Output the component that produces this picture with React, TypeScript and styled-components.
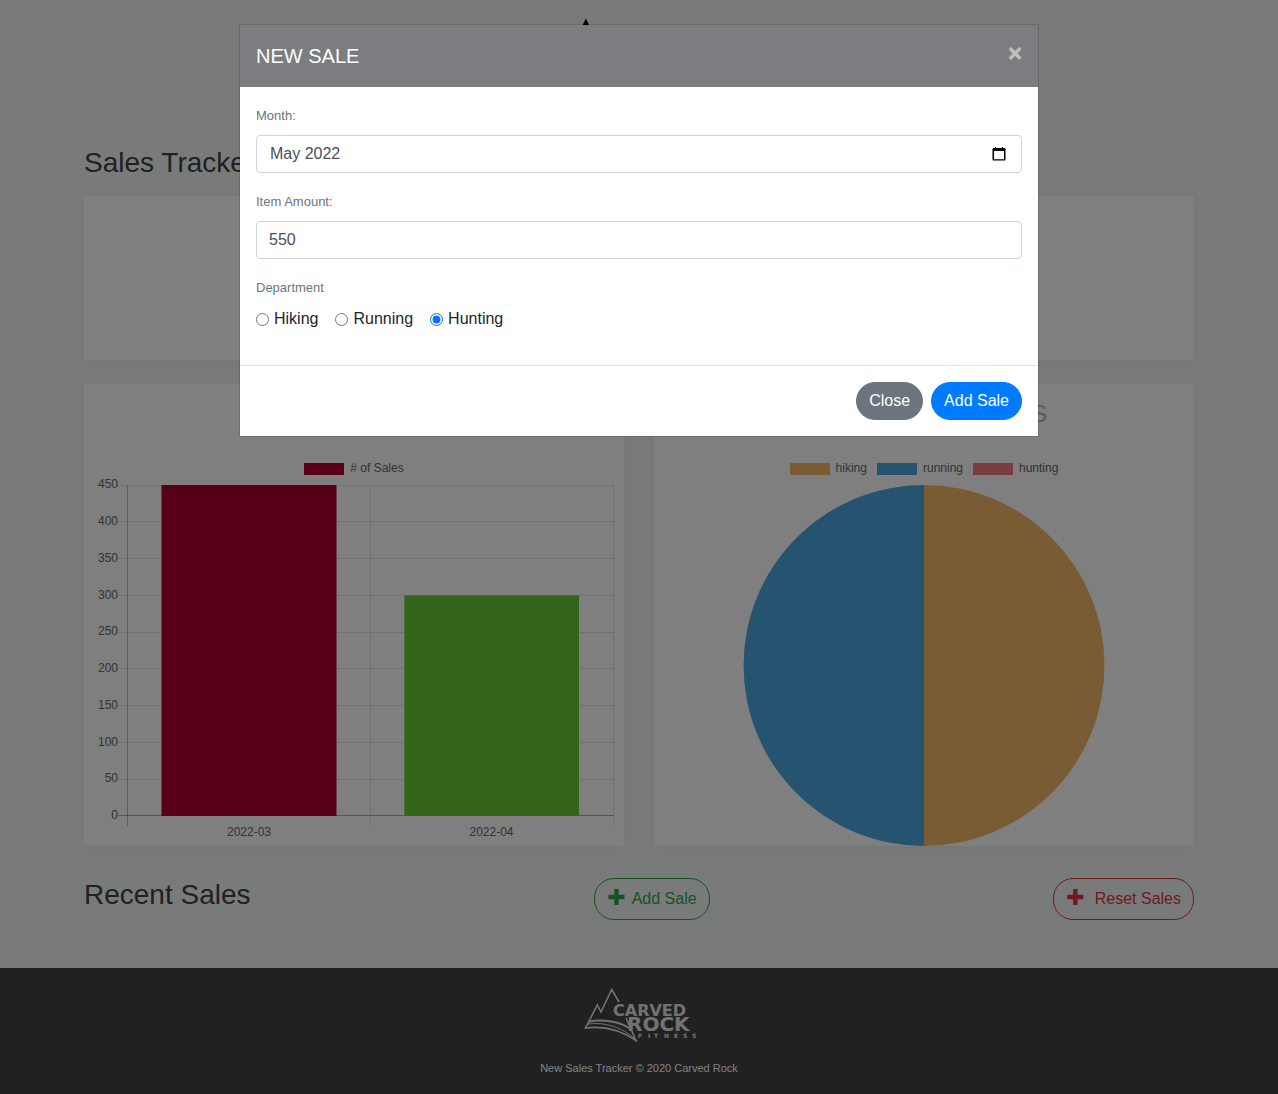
import React, { useState } from "react";
import styled, { createGlobalStyle } from "styled-components";

const GlobalStyle = createGlobalStyle`
  *, *::before, *::after { box-sizing: border-box; }
  body {
    margin: 0;
    background: #f3f7f5;
    color: #212529;
    font: 16px/24px "Liberation Sans", Arial, sans-serif;
  }
`;

const Page = styled.div`
  display: flex;
  flex-direction: column;
  min-height: 100vh;
`;

const Main = styled.main`
  flex: 1;
  width: 100%;
  max-width: 1140px;
  margin: 0 auto;
  padding: 146px 15px 48px;
`;

const Heading = styled.h3`
  margin: 0;
  font-size: 28px;
  line-height: 34px;
  font-weight: 400;
  color: #424242;
`;

const Panel = styled.section`
  background: #fff;
  box-shadow: 0 2px 16px rgba(0, 0, 0, 0.05);
`;

const SummaryPanel = styled(Panel)`
  margin: 16px 0 24px;
  min-height: 164px;
`;

const ChartGrid = styled.div`
  display: grid;
  grid-template-columns: 1fr 1fr;
  gap: 30px;
`;

const ChartHeader = styled.header`
  height: 77px;
  padding-top: 15px;
  text-align: center;
`;

const ChartTitle = styled.h4`
  margin: 0;
  font-size: 24px;
  line-height: 29px;
  font-weight: 400;
  color: #b4b4b4;
`;

const Legend = styled.ul`
  display: flex;
  justify-content: center;
  gap: 10px;
  margin: 0;
  padding: 0 0 1px;
  list-style: none;
  font-size: 12px;
  line-height: 14px;
  color: #666;
`;

const LegendItem = styled.li`
  display: flex;
  align-items: flex-end;
  gap: 6px;
`;

const Swatch = styled.span<{ $color: string }>`
  width: 40px;
  height: 12px;
  background: ${(p) => p.$color};
`;

const Chart = styled.svg`
  display: block;
  width: 100%;
  height: auto;
  font-size: 12px;
`;

const RecentRow = styled.div`
  display: flex;
  justify-content: space-between;
  align-items: flex-start;
  margin-top: 32px;
`;

const OutlineButton = styled.button<{ $color: string; $gap: number }>`
  display: inline-flex;
  align-items: center;
  gap: ${(p) => p.$gap}px;
  height: 42px;
  padding: 0 12px;
  border: 1px solid ${(p) => p.$color};
  border-radius: 20px;
  background: transparent;
  color: ${(p) => p.$color};
  font: inherit;
  cursor: pointer;
`;

const Plus = styled.span`
  padding-bottom: 2px;
  font-family: "DejaVu Sans", sans-serif;
  font-size: 22px;
  line-height: 30px;
`;

const Footer = styled.footer`
  display: flex;
  flex-direction: column;
  align-items: center;
  gap: 18px;
  padding: 20px 15px 18px;
  background: #424242;
  color: #fff;
  font-size: 11px;
  line-height: 16px;
`;

const Copyright = styled.p`
  margin: 0;
`;

const Backdrop = styled.div`
  position: fixed;
  inset: 0;
  padding: 24px 8px;
  background: rgba(0, 0, 0, 0.5);
  overflow: auto;
`;

const Caret = styled.span`
  position: absolute;
  top: 16px;
  left: calc(50% - 57px);
  color: #000;
  font: 10px/12px "DejaVu Sans", sans-serif;
`;

const Dialog = styled.div`
  position: relative;
  max-width: 800px;
  margin: 0 auto;
  border: 1px solid rgba(0, 0, 0, 0.12);
  background: #fff;
  background-clip: padding-box;
`;

const DialogHeader = styled.header`
  display: flex;
  justify-content: space-between;
  align-items: flex-start;
  padding: 16px;
  background: #7c7d80;
  color: #fff;
`;

const DialogTitle = styled.h5`
  margin: 0;
  font-size: 20px;
  line-height: 30px;
  font-weight: 400;
`;

const CloseIcon = styled.button`
  padding: 0;
  border: 0;
  background: none;
  color: #fff;
  opacity: 0.5;
  font: 700 24px/24px "Liberation Sans", Arial, sans-serif;
  text-shadow: 0 1px 0 #fff;
  cursor: pointer;
`;

const DialogBody = styled.div`
  display: grid;
  gap: 16px;
  padding: 16px 16px 34px;
`;

const Field = styled.div`
  display: grid;
  gap: 6px;
`;

const FieldLabel = styled.label`
  font-size: 13px;
  line-height: 26px;
  color: #6c757d;
`;

const Input = styled.input`
  width: 100%;
  height: 38px;
  padding: 6px 12px;
  border: 1px solid #ced4da;
  border-radius: 4px;
  background: #fff;
  color: #495057;
  font: inherit;
`;

const MonthBox = styled.div`
  display: flex;
  align-items: center;
  height: 38px;
  padding: 0 15px 0 1px;
  border: 1px solid #ced4da;
  border-radius: 4px;
`;

const MonthInput = styled(Input)`
  flex: 1;
  min-width: 0;
  height: 36px;
  border: 0;
  background: transparent;
`;

const PickerButton = styled.button`
  display: flex;
  padding: 0;
  border: 0;
  background: none;
  color: #000;
  cursor: pointer;
`;

const RadioRow = styled.div`
  display: flex;
  gap: 17px;
`;

const RadioLabel = styled.label`
  display: flex;
  align-items: center;
  gap: 5px;
`;

const Radio = styled.input`
  width: 13px;
  height: 13px;
  margin: 1px 0 0;
`;

const DialogFooter = styled.footer`
  display: flex;
  justify-content: flex-end;
  gap: 8px;
  padding: 16px;
  border-top: 1px solid #dee2e6;
`;

const Button = styled.button<{ $color: string }>`
  padding: 6px 12px;
  border: 1px solid ${(p) => p.$color};
  border-radius: 20px;
  background: ${(p) => p.$color};
  color: #fff;
  font: inherit;
  cursor: pointer;
`;

const gridLines = [9, 45, 82, 119, 156, 192, 229, 266, 303, 339].map((y, i) => ({
  y: y + 0.5,
  baseline: Math.round(12.4 + i * 36.75),
  label: 450 - i * 50,
}));

function BarChart() {
  return (
    <Chart viewBox="0 0 540 370" role="img" aria-label="Sales by month">
      <g stroke="#000" strokeOpacity="0.1">
        {gridLines.map(({ y, label }) => (
          <line key={label} x1="34" x2="530" y1={y} y2={y} />
        ))}
        <path d="M286.5 9V350M529.5 9V350" />
      </g>
      <path d="M43.5 9V350M34 339.5H530" stroke="#000" strokeOpacity="0.25" />
      <rect x="78" y="9" width="174" height="331" fill="#b00030" />
      <path d="M77.5 9V340M252.5 9V340" stroke="#b00030" strokeOpacity="0.5" />
      <rect x="321" y="120" width="174" height="220" fill="#66cc36" />
      <path d="M320.5 340V119.5H495" fill="none" stroke="#66cc36" strokeOpacity="0.7" />
      <g fill="#666" textAnchor="end">
        {gridLines.map(({ baseline, label }) => (
          <text key={label} x="34" y={baseline}>{label}</text>
        ))}
      </g>
      <g fill="#666" textAnchor="middle">
        <text x="165" y="360">2022-03</text>
        <text x="407.5" y="360">2022-04</text>
      </g>
    </Chart>
  );
}

function PieChart() {
  return (
    <Chart viewBox="0 0 540 370" role="img" aria-label="Sales by department">
      <path d="M270 9A180.5 180.5 0 0 1 270 370Z" fill="#f2b866" />
      <path d="M270 370A180.5 180.5 0 0 1 270 9Z" fill="#4ca6de" />
    </Chart>
  );
}

function Logo() {
  return (
    <svg width="114" height="54" viewBox="-2 0 114 54" role="img" aria-label="Carved Rock Fitness">
      <g fill="none" stroke="#e4e4e4" strokeWidth="1.6">
        <path d="M35 14L27.7 1.5L17 24L13.3 17L1.5 40C20 37.5 38 43 52 52.5L42 30" />
        <path d="M5 33.5C20 31 36 34 45 40" strokeWidth="2" />
        <path d="M4 36C22 33.5 40 40 52 52" strokeWidth="1" />
      </g>
      <g fill="#e4e4e4" fontFamily='"DejaVu Sans", sans-serif' fontWeight="700">
        <text x="29" y="27.5" fontSize="16">CARVED</text>
        <text x="43" y="43" fontSize="20">ROCK</text>
        <text x="54 64 70 80 90 99 108" y="50" fontSize="6">FITNESS</text>
      </g>
    </svg>
  );
}

function CalendarIcon() {
  return (
    <svg width="14" height="14" viewBox="0 0 14 14" aria-hidden="true">
      <path
        fill="currentColor"
        fillRule="evenodd"
        d="M3 0H4V1H10V0H11V1H12.5Q13.5 1 13.5 2V12.5Q13.5 13.5 12.5 13.5H1.5Q.5 13.5 .5 12.5V2Q.5 1 1.5 1H3ZM2 4V12.3H12V4Z"
      />
    </svg>
  );
}

const departments = ["Hiking", "Running", "Hunting"];

function NewSaleDialog() {
  const [month, setMonth] = useState("May 2022");
  const [amount, setAmount] = useState("550");
  const [department, setDepartment] = useState("Hunting");
  return (
    <Dialog role="dialog" aria-modal="true" aria-labelledby="new-sale-title">
      <DialogHeader>
        <DialogTitle id="new-sale-title">NEW SALE</DialogTitle>
        <CloseIcon type="button" aria-label="Close">×</CloseIcon>
      </DialogHeader>
      <DialogBody>
        <Field>
          <FieldLabel htmlFor="month">Month:</FieldLabel>
          <MonthBox>
            <MonthInput id="month" type="text" value={month} onChange={(e) => setMonth(e.target.value)} />
            <PickerButton type="button" aria-label="Show month picker">
              <CalendarIcon />
            </PickerButton>
          </MonthBox>
        </Field>
        <Field>
          <FieldLabel htmlFor="amount">Item Amount:</FieldLabel>
          <Input id="amount" type="number" value={amount} onChange={(e) => setAmount(e.target.value)} />
        </Field>
        <Field role="radiogroup" aria-labelledby="department-label">
          <FieldLabel as="span" id="department-label">Department</FieldLabel>
          <RadioRow>
            {departments.map((name) => (
              <RadioLabel key={name}>
                <Radio
                  type="radio"
                  name="department"
                  value={name}
                  checked={department === name}
                  onChange={() => setDepartment(name)}
                />
                {name}
              </RadioLabel>
            ))}
          </RadioRow>
        </Field>
      </DialogBody>
      <DialogFooter>
        <Button type="button" $color="#6c757d">Close</Button>
        <Button type="button" $color="#007bff">Add Sale</Button>
      </DialogFooter>
    </Dialog>
  );
}

export default function App() {
  return (
    <>
      <GlobalStyle />
      <Page>
        <Main>
          <Heading>Sales Tracker</Heading>
          <SummaryPanel />
          <ChartGrid>
            <Panel>
              <ChartHeader />
              <Legend>
                <LegendItem><Swatch $color="#b00030" /># of Sales</LegendItem>
              </Legend>
              <BarChart />
            </Panel>
            <Panel>
              <ChartHeader>
                <ChartTitle>DEPARTMENT SALES</ChartTitle>
              </ChartHeader>
              <Legend>
                <LegendItem><Swatch $color="#f2b866" />hiking</LegendItem>
                <LegendItem><Swatch $color="#4ca6de" />running</LegendItem>
                <LegendItem><Swatch $color="#f87a80" />hunting</LegendItem>
              </Legend>
              <PieChart />
            </Panel>
          </ChartGrid>
          <RecentRow>
            <Heading>Recent Sales</Heading>
            <OutlineButton type="button" $color="#28a745" $gap={6}>
              <Plus aria-hidden="true">✚</Plus>Add Sale
            </OutlineButton>
            <OutlineButton type="button" $color="#dc3545" $gap={10}>
              <Plus aria-hidden="true">✚</Plus>Reset Sales
            </OutlineButton>
          </RecentRow>
        </Main>
        <Footer>
          <Logo />
          <Copyright>New Sales Tracker © 2020 Carved Rock</Copyright>
        </Footer>
      </Page>
      <Backdrop>
        <Caret aria-hidden="true">▲</Caret>
        <NewSaleDialog />
      </Backdrop>
    </>
  );
}
